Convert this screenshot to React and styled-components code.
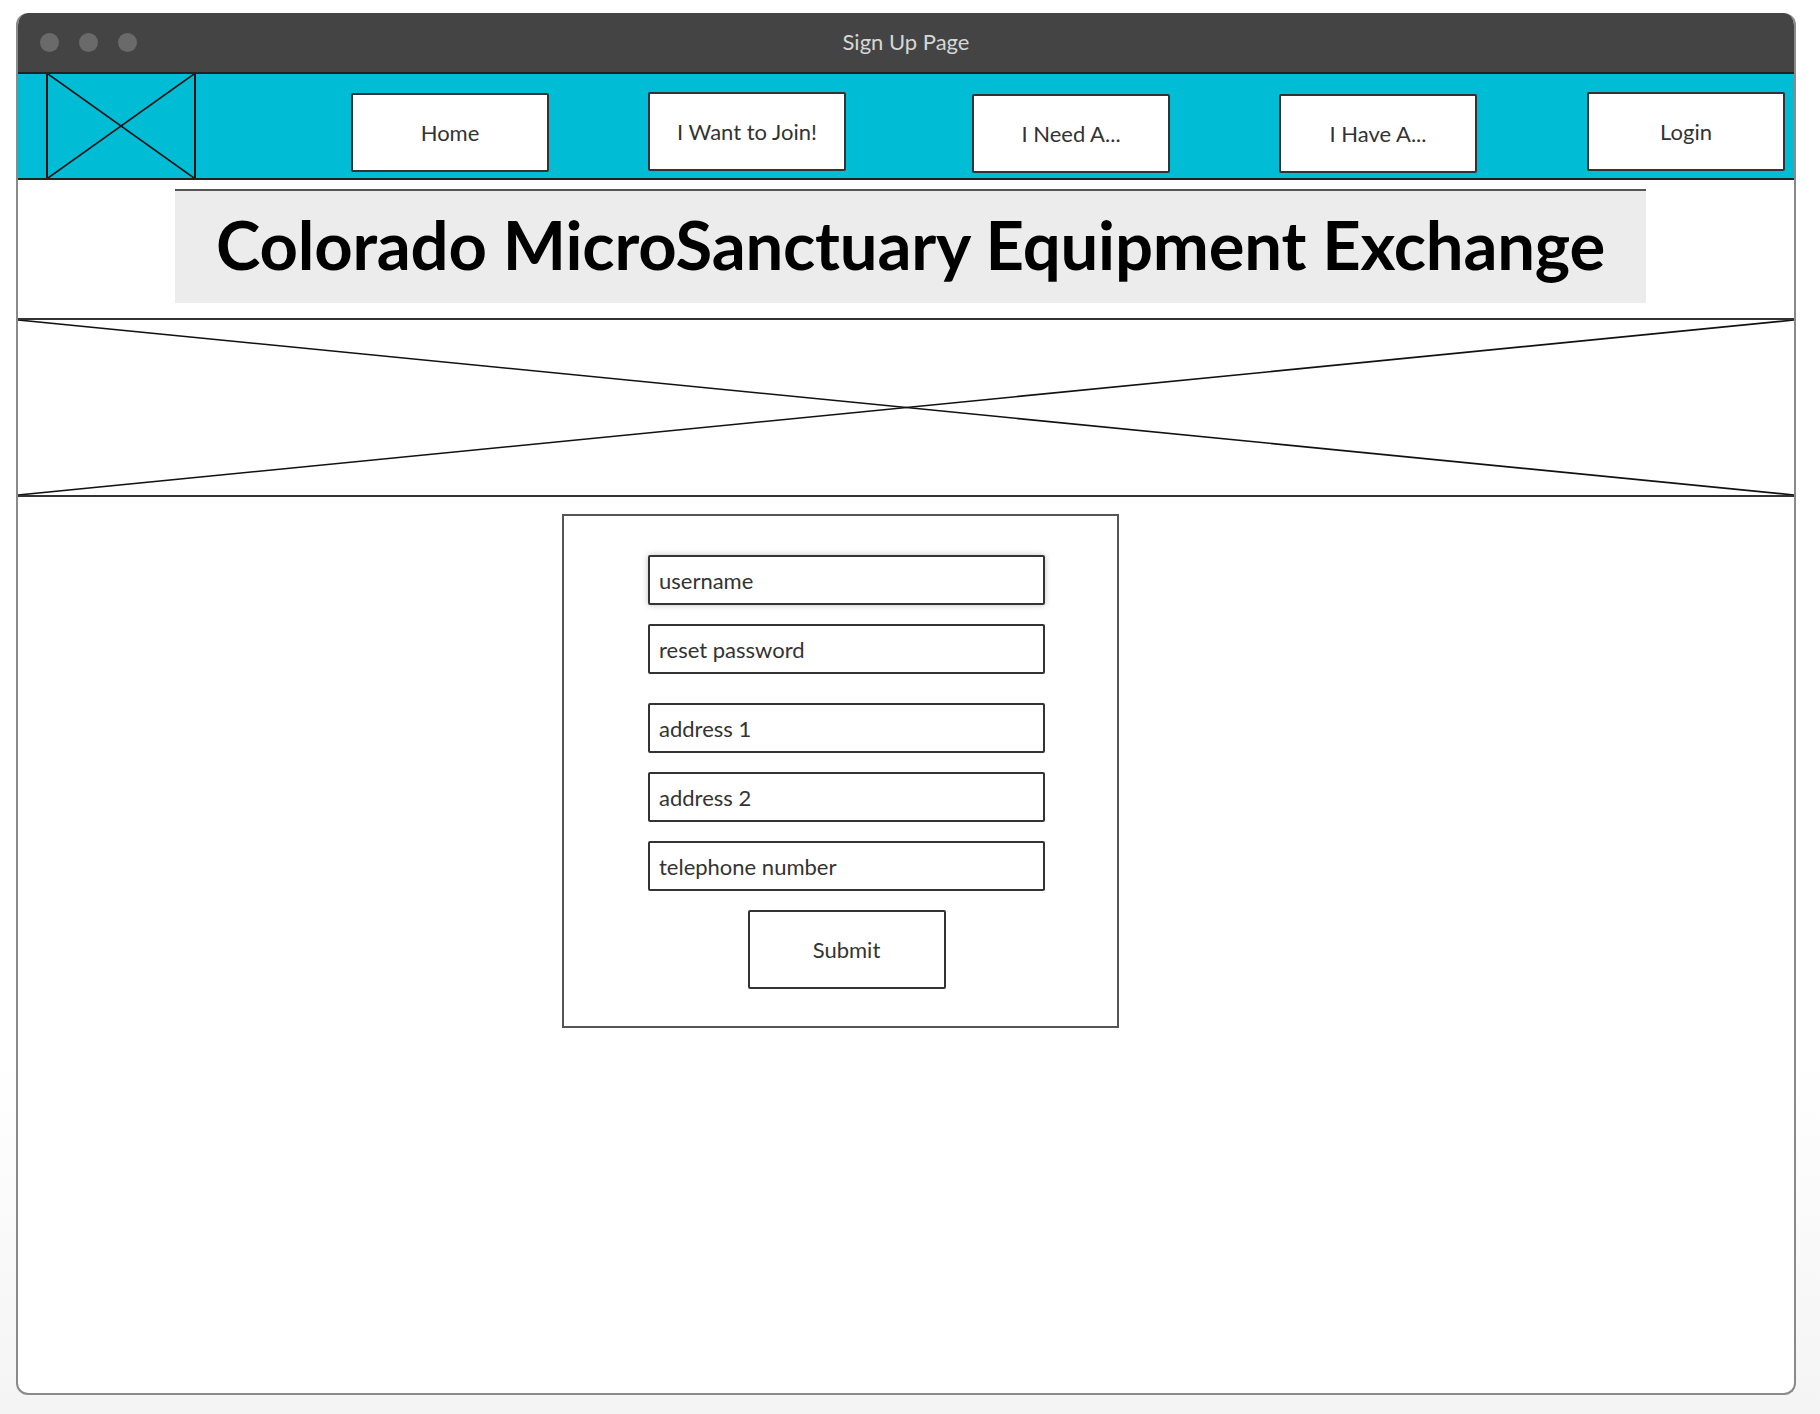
import React from "react";
import styled, { createGlobalStyle } from "styled-components";

const GlobalStyle = createGlobalStyle`
  html, body {
    margin: 0;
    padding: 0;
  }
  body {
    width: 1820px;
    height: 1414px;
    overflow: hidden;
    background: linear-gradient(#ffffff 75%, #f4f4f4);
    font-family: Lato, "Liberation Sans", sans-serif;
  }
`;

// gap before each button and its top offset, as drawn in the mockup
const navItems = [
  { label: "Home", gap: 0, top: 1 },
  { label: "I Want to Join!", gap: 99, top: 0 },
  { label: "I Need A...", gap: 126, top: 2 },
  { label: "I Have A...", gap: 109, top: 2 },
  { label: "Login", gap: 110, top: 0 },
];

const fields = [
  { label: "username", shadow: true },
  { label: "reset password", extra: true },
  { label: "address 1" },
  { label: "address 2" },
  { label: "telephone number" },
];

const Crossed = () => (
  <Cross viewBox="0 0 100 100" preserveAspectRatio="none">
    <line x1="0" y1="0" x2="100" y2="100" vectorEffect="non-scaling-stroke" />
    <line x1="100" y1="0" x2="0" y2="100" vectorEffect="non-scaling-stroke" />
  </Cross>
);

const App = () => {
  return (
    <>
      <GlobalStyle />
      <Window>
        <TitleBar>
          <Dots>
            <span />
            <span />
            <span />
          </Dots>
          <Title>Sign Up Page</Title>
        </TitleBar>
        <Nav>
          <Logo>
            <Crossed />
          </Logo>
          <Menu>
            {navItems.map((item) => (
              <NavButton key={item.label} $gap={item.gap} $top={item.top}>
                {item.label}
              </NavButton>
            ))}
          </Menu>
        </Nav>
        <Header>
          <Heading>Colorado MicroSanctuary Equipment Exchange</Heading>
        </Header>
        <Banner>
          <Crossed />
        </Banner>
        <FormBox>
          {fields.map((f) => (
            <Field key={f.label} $shadow={f.shadow} $extra={f.extra}>
              {f.label}
            </Field>
          ))}
          <Submit>Submit</Submit>
        </FormBox>
      </Window>
    </>
  );
};

const Window = styled.div`
  box-sizing: border-box;
  margin: 13px 0 0 16px;
  width: 1780px;
  height: 1382px;
  background: #fff;
  border: 2px solid #8a8a8a;
  border-top: none;
  border-radius: 12px;
  overflow: hidden;
`;

const TitleBar = styled.div`
  position: relative;
  height: 59px;
  margin: 0 -2px;
  background: #444444;
  border-radius: 12px 12px 0 0;
  display: flex;
  align-items: center;
  justify-content: center;
`;

const Dots = styled.div`
  position: absolute;
  left: 24px;
  top: 20px;
  display: flex;
  gap: 20px;
  span {
    width: 19px;
    height: 19px;
    border-radius: 50%;
    background: #6a6a6a;
  }
`;

const Title = styled.div`
  color: #d6d6d6;
  font-size: 22px;
  margin-top: -2px;
`;

const Nav = styled.div`
  box-sizing: border-box;
  height: 108px;
  background: #00bcd4;
  border-top: 2px solid #222;
  border-bottom: 2px solid #222;
  display: flex;
  align-items: stretch;
`;

const Logo = styled.div`
  box-sizing: border-box;
  width: 150px;
  margin-left: 28px;
  border-left: 2px solid #111;
  border-right: 2px solid #111;
  display: flex;
`;

const Cross = styled.svg`
  width: 100%;
  height: 100%;
  display: block;
  line {
    stroke: #111;
    stroke-width: 1.6;
  }
`;

const Menu = styled.div`
  display: flex;
  align-items: flex-start;
  padding-top: 18px;
  margin-left: 155px;
`;

const NavButton = styled.div`
  box-sizing: border-box;
  width: 198px;
  height: 79px;
  margin-left: ${(p) => p.$gap}px;
  margin-top: ${(p) => p.$top}px;
  background: #fff;
  border: 2px solid #333;
  border-radius: 2px;
  display: flex;
  align-items: center;
  justify-content: center;
  font-size: 22px;
  color: #333;
`;

const Header = styled.div`
  height: 138px;
  padding: 9px 0 0 157px;
  box-sizing: border-box;
`;

const Heading = styled.h1`
  box-sizing: border-box;
  margin: 0;
  width: 1471px;
  height: 114px;
  padding-bottom: 6px;
  background: #ececec;
  border-top: 2px solid #555;
  display: flex;
  align-items: center;
  justify-content: center;
  font-size: 67px;
  font-weight: 700;
  color: #000;
  letter-spacing: -0.2px;
`;

const Banner = styled.div`
  box-sizing: border-box;
  height: 179px;
  border-top: 2px solid #333;
  border-bottom: 2px solid #333;
  display: flex;
`;

const FormBox = styled.div`
  box-sizing: border-box;
  margin: 17px 0 0 544px;
  width: 557px;
  height: 514px;
  border: 2px solid #555;
  padding: 39px 72px 0 84px;
  display: flex;
  flex-direction: column;
  align-items: center;
`;

const Field = styled.div`
  box-sizing: border-box;
  width: 397px;
  height: 50px;
  flex-shrink: 0;
  border: 2px solid #333;
  border-radius: 2px;
  padding-left: 9px;
  display: flex;
  align-items: center;
  font-size: 22px;
  color: #333;
  margin-bottom: ${(p) => (p.$extra ? "29px" : "19px")};
  box-shadow: ${(p) => (p.$shadow ? "0 0 6px rgba(0,0,0,0.25)" : "none")};
`;

const Submit = styled.div`
  box-sizing: border-box;
  width: 198px;
  height: 79px;
  flex-shrink: 0;
  border: 2px solid #333;
  border-radius: 2px;
  display: flex;
  align-items: center;
  justify-content: center;
  font-size: 22px;
  color: #333;
`;

export default App;
